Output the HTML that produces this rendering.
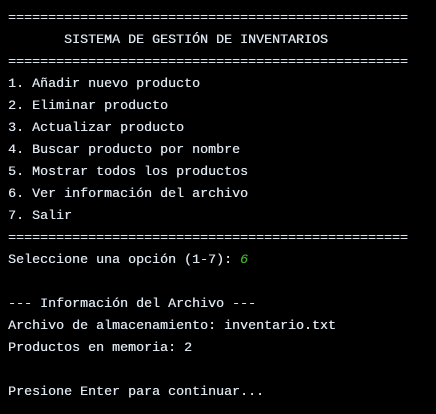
<!DOCTYPE html>
<html><head><meta charset="utf-8"><style>
html,body{margin:0;padding:0;background:#000;width:436px;height:414px;overflow:hidden}
pre{margin:0;position:absolute;left:8px;top:8px;font-family:"Liberation Mono",monospace;font-size:13.33px;line-height:22px;color:#dde6ef;white-space:pre;text-shadow:0.3px 0 0 #dde6ef}
.g{color:#3fae2c;font-style:italic;text-shadow:0.3px 0 0 #3fae2c}
</style></head><body><pre>==================================================
       SISTEMA DE GESTIÓN DE INVENTARIOS
==================================================
1. Añadir nuevo producto
2. Eliminar producto
3. Actualizar producto
4. Buscar producto por nombre
5. Mostrar todos los productos
6. Ver información del archivo
7. Salir
==================================================
Seleccione una opción (1-7): <span class="g">6</span>

--- Información del Archivo ---
Archivo de almacenamiento: inventario.txt
Productos en memoria: 2

Presione Enter para continuar...</pre></body></html>
